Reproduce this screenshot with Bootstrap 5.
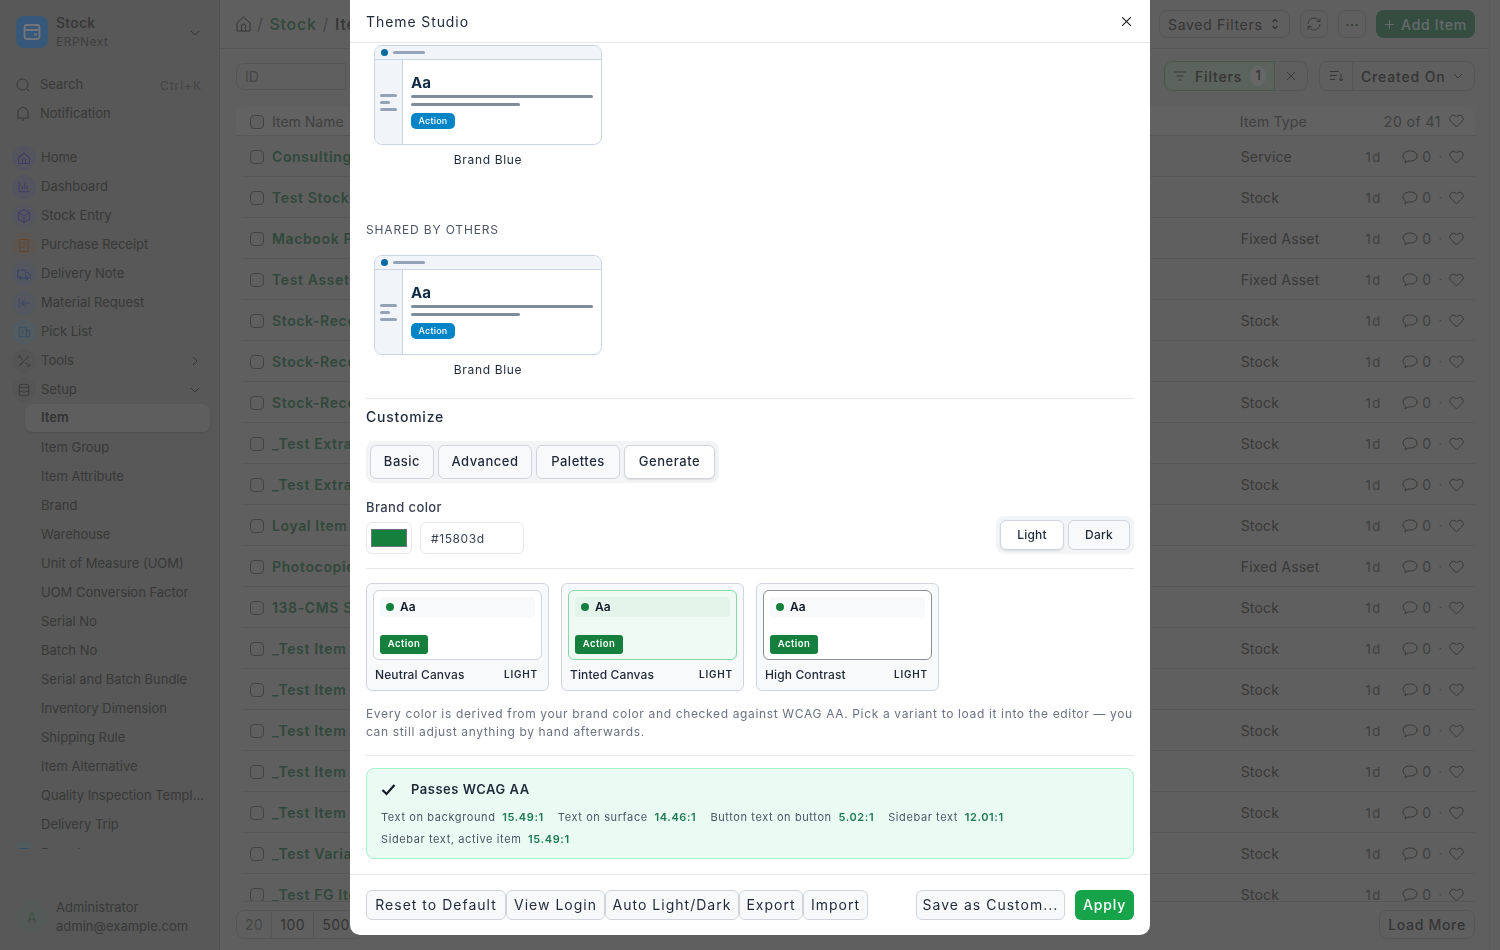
<!DOCTYPE html>
<html lang="en">
<head>
  <meta charset="UTF-8" />
  <meta name="viewport" content="width=device-width, initial-scale=1.0"/>
  <title>Theme Studio</title>
  <link href="https://cdn.jsdelivr.net/npm/bootstrap@5.3.0/dist/css/bootstrap.min.css" rel="stylesheet" />
  <style>
    html, body { height: 100%; overflow: hidden; }
    body { font-family: Inter, "Liberation Sans", sans-serif; color: #1f2937; background: #bebebe; letter-spacing: .03em; }
    svg { flex: none; display: block; }

    /* sidebar */
    .app-side { width: 220px; flex: none; background: #aeb0af; border-right: 1px solid #a2a3a3; color: #6c6c6c; }
    .side-head { height: 70px; padding: 16px 16px 0; }
    .side-logo { width: 32px; height: 32px; border-radius: 8px; background: #70b0f4; }
    .side-title { font-size: 14px; font-weight: 500; line-height: 19px; margin-top: -3px; letter-spacing: .02em; }
    .side-sub { font-size: 12px; line-height: 19px; color: #7e7e7e; }
    .side-tool { height: 29px; padding-left: 16px; padding-right: 17px; font-size: 13px; gap: 10px; letter-spacing: 0; color: #727272; }
    .side-nav { height: 721px; overflow: hidden; padding-top: 15px; flex: none; }
    .side-link { height: 29px; font-size: 13px; padding-left: 12px; padding-right: 19px; gap: 5px; letter-spacing: 0; color: #727272; }
    .side-ico { width: 24px; height: 24px; border-radius: 50%; }
    .side-sublink { height: 29px; font-size: 13px; padding-left: 41px; white-space: nowrap; letter-spacing: 0; color: #727272; }
    .side-sublink.active { height: 28px; margin: 0 9px 1px 25px; padding-left: 16px; background: #bcbcbc; font-weight: 600; border-radius: 8px; box-shadow: 0 1px 2px rgba(0,0,0,.12); color: #666; }
    .side-foot { margin-top: 49px; padding: 0 16px; }
    .side-avatar { width: 32px; height: 32px; border-radius: 50%; background: #a9b5ae; color: #7fa08c; font-size: 14px; }
    .side-foot .side-sub { font-size: 13px; letter-spacing: 0; color: #727272; }

    /* main list */
    .app-main { width: 1270px; flex: none; border-right: 1px solid #b4b4b4; color: #6a6a6a; }
    .top-bar { height: 49px; border-bottom: 1px solid #aeaeae; padding: 0 14px 0 16px; }
    .crumb { font-size: 16px; font-weight: 500; gap: 6px; letter-spacing: .045em; }
    .crumb a { color: #62907a; text-decoration: none; }
    .crumb .sep { color: #8a8a8a; font-weight: 400; }
    .tool-btn { height: 28px; border: 1px solid #adadad; border-radius: 8px; font-size: 14px; padding: 0 8px; letter-spacing: .05em; }
    .btn-add { height: 28px; background: #689a80; color: #c8d8d8; border-radius: 8px; font-size: 14px; font-weight: 500; padding: 0 8px; gap: 6px; width: 99px; letter-spacing: .05em; }
    .filter-bar { height: 58px; padding: 12px 14px 0 16px; }
    .filter-id { width: 110px; height: 27px; border: 1px solid #adadad; border-radius: 8px 0 0 8px; font-size: 14px; color: #8c8c8c; padding-left: 8px; line-height: 25px; margin-top: 2px; letter-spacing: 0; }
    .filter-btn { height: 30px; border: 1px solid #adadad; font-size: 14px; letter-spacing: .06em; font-weight: 500; }
    .count-pill { width: 20px; height: 20px; background: #cfcfcf; border-radius: 50%; font-size: 13px; letter-spacing: 0; }
    .list-head { height: 29px; margin: 0 14px 0 16px; background: #c4c4c4; border-bottom: 1px solid #aeaeae; border-radius: 8px 8px 0 0; font-size: 14px; color: #808080; padding: 0 11px 0 14px; }
    .list-body { height: 766px; overflow: hidden; margin: 0 14px 0 22px; flex: none; border-bottom: 1px solid #aeaeae; }
    .list-row { height: 41px; border-bottom: 1px solid #aeaeae; padding: 0 11px 0 8px; font-size: 14px; color: #727272; }
    .chk { width: 14px; height: 14px; border: 1px solid #868686; border-radius: 4px; background: #bebebe; flex: none; margin-top: 1px; }
    .row-name { width: 971px; margin-left: 8px; padding-top: 1px; font-weight: 600; color: #62907a; font-size: 14px; white-space: nowrap; letter-spacing: .045em; }
    .row-type { width: 125px; letter-spacing: .012em; }
    .row-age { width: 37px; font-size: 13px; color: #808080; letter-spacing: .12em; padding-top: 3px; }
    .row-meta { gap: 4px; color: #808080; }
    .row-meta svg { margin-top: 2px; }
    .list-foot { padding: 8px 14px 0 16px; }
    .page-size { height: 29px; border: 1px solid #adadad; font-size: 14px; padding: 0 8px; line-height: 27px; }

    /* modal */
    .modal-backdrop.studio { opacity: .5; background: #000; }
    .studio-dialog { width: 800px; max-width: 800px; height: 935px; margin: 0 auto; }
    .studio-dialog .modal-content { height: 100%; border: 0; border-radius: 0 0 10px 10px; color: #1f2937; }
    .studio-dialog .modal-header { height: 43px; padding: 0 16px; border-bottom: 1px solid #e5e7eb; border-radius: 0; flex: none; }
    .studio-title { font-size: 14px; font-weight: 400; letter-spacing: .065em; color: #1f2937; }
    .studio-close { font-size: 9px; margin-right: -5px !important; opacity: .9; }
    .studio-dialog .modal-body { padding: 2px 16px 0; overflow: hidden; flex: 1; }
    .studio-dialog .modal-footer { height: 61px; padding: 0 16px; border-top: 1px solid #e5e7eb; flex-wrap: nowrap; flex: none; }

    .theme-card { width: 228px; height: 100px; margin-left: 8px; border: 1px solid #cbd5e1; border-radius: 8px; overflow: hidden; background: #fff; }
    .tc-top { height: 14px; flex: none; background: #f1f5f9; border-bottom: 1px solid #cbd5e1; padding-left: 6px; gap: 5px; }
    .tc-dot { width: 7px; height: 7px; border-radius: 50%; background: #0369a1; }
    .tc-bar { height: 3px; border-radius: 2px; background: #94a3b8; }
    .tc-side { width: 28px; flex: none; background: #f1f5f9; border-right: 1px solid #cbd5e1; padding-left: 5px; gap: 4px; }
    .tc-main { padding: 14px 8px 0; }
    .tc-aa { font-size: 15px; font-weight: 700; line-height: 18px; color: #0f2a43; letter-spacing: 0; }
    .tc-line { height: 3px; border-radius: 2px; background: #7f8c99; margin-top: 3px; }
    .tc-line.short { width: 109px; margin-top: 5px; }
    .tc-action { width: 44px; height: 16px; margin-top: 7px; background: #0284c7; color: #fff; font-size: 9px; font-weight: 500; border-radius: 5px; letter-spacing: .02em; }
    .tc-caption { width: 228px; margin-left: 8px; text-align: center; font-size: 12px; line-height: 15px; margin-top: 7px; letter-spacing: .055em; }
    .studio-label { font-size: 12px; line-height: 15px; color: #4b5563; letter-spacing: .07em; margin: 55px 0 18px; }
    .studio-hr { border-top: 1px solid #e5e7eb; }
    .studio-h { font-size: 14px; font-weight: 500; line-height: 18px; letter-spacing: .055em; margin: 9px 0 15px; }
    .seg { background: #f3f4f6; border-radius: 8px; padding: 4px; gap: 4px; }
    .seg .btn { --bs-btn-padding-x: 0; --bs-btn-padding-y: 0; height: 34px; font-size: 13px; font-weight: 500; background: #f8f9fb; border: 1px solid #d1d5db; border-radius: 6px; color: #1f2937; letter-spacing: .04em; }
    .seg .btn.on { background: #fff; box-shadow: 0 1px 2px rgba(0,0,0,.1); }
    .seg-sm .btn { height: 30px; font-size: 12px; letter-spacing: .02em; }
    .brand-lbl { font-size: 13px; font-weight: 500; line-height: 16px; letter-spacing: .03em; color: #374151; margin-top: 16px; }
    .brand-row { margin-top: 1px; }
    .swatch { width: 46px; height: 32px; border: 1px solid #e5e7eb; border-radius: 6px; padding: 6px 4px; }
    .swatch span { display: block; height: 100%; background: #15803d; border: 1px solid #6b7280; }
    .hex-input { width: 104px; height: 32px; border: 1px solid #e5e7eb; border-radius: 6px; font-size: 12px; padding: 0 10px; line-height: 32px; letter-spacing: .05em; color: #374151; }
    .variants { gap: 12px; margin-top: 14px; }
    .variant { width: 183px; height: 108px; background: #f8f9fb; border: 1px solid #d1d5db; border-radius: 6px; padding: 6px; }
    .vr-canvas { height: 70px; background: #fff; border: 1px solid #d1d5db; border-radius: 6px; padding: 6px; }
    .vr-canvas.tint { background: #f0faf4; border-color: #86d8a4; }
    .vr-canvas.contrast { border-color: #8a8f98; }
    .vr-top { height: 20px; background: #f8f9fa; border-radius: 4px; padding-left: 6px; gap: 6px; font-size: 12px; font-weight: 600; letter-spacing: 0; color: #111827; }
    .tint .vr-top { background: #e5f4ea; }
    .vr-dot { width: 8px; height: 8px; border-radius: 50%; background: #15803d; }
    .vr-action { width: 48px; height: 19px; margin-top: 18px; background: #15803d; color: #fff; border-radius: 3px; font-size: 9.5px; font-weight: 600; letter-spacing: .05em; }
    .vr-name { padding: 0 4px 0 2px; font-size: 12px; font-weight: 500; line-height: 15px; margin-top: 7px; letter-spacing: .01em; }
    .vr-name small { font-size: 10px; font-weight: 600; letter-spacing: .08em; }
    .studio-note { font-size: 12px; line-height: 18px; color: #6b7280; letter-spacing: .054em; margin: 14px 0 14px; }
    .wcag { height: 91px; margin-top: 12px; background: #e9fbf3; border: 1px solid #a7f3d0; border-radius: 8px; padding: 12px 14px; }
    .wcag-title { font-size: 13px; font-weight: 600; letter-spacing: .04em; line-height: 16px; gap: 15px; }
    .wcag-row { font-size: 11px; line-height: 22px; color: #4b5563; letter-spacing: .055em; gap: 14px; }
    .wcag-row b { font-weight: 600; color: #1f7a54; margin-left: 3px; }
    .foot-btn { --bs-btn-padding-x: 0; --bs-btn-padding-y: 0; height: 30px; padding-bottom: 2px; font-size: 14px; background: #f8f9fb; border: 1px solid #d1d5db; border-radius: 6px; color: #1f2937; letter-spacing: .072em; }
    .foot-apply { height: 30px; width: 59px; --bs-btn-padding-x: 0; --bs-btn-padding-y: 0; padding-bottom: 2px; font-size: 14px; background: #16a34a; border: 0; border-radius: 6px; color: #fff; font-weight: 500; letter-spacing: .06em; }
    .foot-apply:hover { background: #16a34a; color: #fff; }
  </style>
</head>
<body>

  <div class="d-flex h-100">
    <aside class="app-side d-flex flex-column">
      <div class="side-head d-flex align-items-start gap-2">
        <div class="side-logo d-flex align-items-center justify-content-center">
          <svg width="18" height="18" viewBox="0 0 18 18" fill="none" stroke="#e4ecf4" stroke-width="1.800"><rect x="1.500" y="2" width="15" height="14" rx="2.500"/><path d="M1.500 7h15M11 11.500h3"/></svg>
        </div>
        <div class="flex-grow-1">
          <div class="side-title">Stock</div>
          <div class="side-sub">ERPNext</div>
        </div>
        <svg style="margin:11px 2px 0 0" width="12" height="12" viewBox="0 0 12 12" fill="none" stroke="#6c6c6c"><path d="M2 4l4 4 4-4"/></svg>
      </div>
      <div class="side-tool d-flex align-items-center">
        <svg width="14" height="14" viewBox="0 0 14 14" fill="none" stroke="#6c6c6c"><circle cx="6.500" cy="6.500" r="5.500"/><path d="M11 11l2 2"/></svg>
        <span class="flex-grow-1">Search</span><span style="font-size:12px;letter-spacing:.08em;color:#8a8a8a;margin-top:2px">Ctrl+K</span>
      </div>
      <div class="side-tool d-flex align-items-center">
        <svg width="14" height="15" viewBox="0 0 14 15" fill="none" stroke="#6c6c6c"><path d="M2 11V6.500a5 5 0 0 1 10 0V11l1 1H1zM6 14h2"/></svg>
        <span>Notification</span>
      </div>
      <nav class="side-nav" id="sideNav"></nav>
      <div class="side-foot d-flex align-items-center gap-2">
        <div class="side-avatar d-flex align-items-center justify-content-center">A</div>
        <div>
          <div class="side-sub">Administrator</div>
          <div class="side-sub">admin@example.com</div>
        </div>
      </div>
    </aside>

    <main class="app-main d-flex flex-column">
      <div class="top-bar d-flex align-items-center">
        <div class="crumb d-flex align-items-center flex-grow-1">
          <svg width="15" height="16" viewBox="0 0 15 16" fill="none" stroke="#6c6c6c"><path d="M1 7l6.500-6L14 7v8H1zM5.500 15v-5a2 2 0 0 1 4 0v5"/></svg>
          <span class="sep">/</span><a href="#">Stock</a><span class="sep">/</span><span>Item</span>
        </div>
        <div class="d-flex align-items-center gap-2">
          <div class="tool-btn d-flex align-items-center gap-2" style="width:131px;margin-right:2px">Saved Filters
            <svg width="8" height="12" viewBox="0 0 8 12" fill="none" stroke="#6a6a6a" stroke-width="1.300"><path d="M1.500 4L4 1.500 6.500 4M1.500 8L4 10.500 6.500 8"/></svg>
          </div>
          <div class="tool-btn d-flex align-items-center justify-content-center" style="width:28px;padding:0;margin-right:2px">
            <svg width="14" height="14" viewBox="0 0 14 14" fill="none" stroke="#787878"><path d="M1 7a6 6 0 0 1 10.500-4L13 4.500M13 1v3.500H9.500M13 7a6 6 0 0 1-10.500 4L1 9.500M1 13V9.500h3.500"/></svg>
          </div>
          <div class="tool-btn d-flex align-items-center justify-content-center" style="width:28px;padding:0;margin-right:2px;letter-spacing:0">&#8943;</div>
          <div class="btn-add d-flex align-items-center justify-content-center">
            <svg width="11" height="11" viewBox="0 0 11 11" stroke="#c8d8d8"><path d="M5.500 1v9M1 5.500h9"/></svg>Add Item
          </div>
        </div>
      </div>

      <div class="filter-bar d-flex justify-content-between">
        <div class="filter-id">ID</div>
        <div class="d-flex" style="gap:11px">
          <div class="d-flex">
            <div class="filter-btn d-flex align-items-center gap-2 px-2" style="width:111px;background:#b5c6bc;border-color:#8fb29f;border-radius:8px 0 0 8px">
              <svg width="14" height="10" viewBox="0 0 14 10" stroke="#727272"><path d="M1 1h12M3.500 5h7M5.500 9h3"/></svg>Filters<span class="count-pill d-flex align-items-center justify-content-center">1</span>
            </div>
            <div class="filter-btn d-flex align-items-center justify-content-center" style="width:33px;border-left:0;border-radius:0 8px 8px 0">
              <svg width="10" height="10" viewBox="0 0 10 10" stroke="#727272"><path d="M1 1l8 8M9 1L1 9"/></svg>
            </div>
          </div>
          <div class="d-flex">
            <div class="filter-btn d-flex align-items-center justify-content-center" style="width:34px;border-radius:8px 0 0 8px">
              <svg width="15" height="12" viewBox="0 0 15 12" fill="none" stroke="#6a6a6a"><path d="M1 1.500h9M1 5.500h7M1 9.500h5M12 4v7M10 9l2 2 2-2"/></svg>
            </div>
            <div class="filter-btn d-flex align-items-center justify-content-between" style="width:122px;border-left:0;border-radius:0 8px 8px 0;padding:0 11px 0 8px">Created On
              <svg width="10" height="10" viewBox="0 0 10 10" fill="none" stroke="#727272"><path d="M1 3l4 4 4-4"/></svg>
            </div>
          </div>
        </div>
      </div>

      <div class="list-head d-flex align-items-center">
        <span class="chk"></span>
        <span class="flex-grow-1 ms-2" style="letter-spacing:0">Item Name</span>
        <span style="width:144px;letter-spacing:.012em">Item Type</span>
        <span>20 of 41</span>
        <svg class="ms-2" width="15" height="14" viewBox="0 0 15 14" fill="none" stroke="#727272"><path d="M7.500 13L1.800 7.300a3.500 3.500 0 0 1 5-5l.7.700.7-.7a3.500 3.500 0 0 1 5 5z"/></svg>
      </div>
      <div class="list-body" id="listBody"></div>
      <div class="list-foot d-flex justify-content-between">
        <div class="d-flex">
          <span class="page-size" style="border-radius:8px 0 0 8px;color:#8c8c8c">20</span><span class="page-size" style="border-left:0">100</span><span class="page-size" style="border-left:0">500</span>
        </div>
        <div class="tool-btn d-flex align-items-center justify-content-center" style="height:29px;width:96px;font-weight:500">Load More</div>
      </div>
    </main>
  </div>

  <div class="modal-backdrop studio show"></div>

  <div class="modal d-block">
    <div class="modal-dialog studio-dialog">
      <div class="modal-content">
        <div class="modal-header">
          <h5 class="modal-title studio-title">Theme Studio</h5>
          <button type="button" class="btn-close studio-close"></button>
        </div>
        <div class="modal-body">
          <div class="theme-slot"></div>
          <div class="studio-label text-uppercase">Shared by others</div>
          <div class="theme-slot"></div>

          <div class="studio-hr" style="margin-top:21px"></div>
          <div class="studio-h">Customize</div>
          <div class="seg d-inline-flex">
            <button class="btn" style="width:64px">Basic</button>
            <button class="btn" style="width:94px">Advanced</button>
            <button class="btn" style="width:84px">Palettes</button>
            <button class="btn on" style="width:91px">Generate</button>
          </div>
          <div class="brand-lbl">Brand color</div>
          <div class="brand-row d-flex justify-content-between align-items-end">
            <div class="d-flex gap-2">
              <div class="swatch"><span></span></div>
              <div class="hex-input">#15803d</div>
            </div>
            <div class="seg seg-sm d-flex">
              <button class="btn on" style="width:64px">Light</button>
              <button class="btn" style="width:62px">Dark</button>
            </div>
          </div>
          <div class="studio-hr" style="margin-top:14px"></div>

          <div class="variants d-flex" id="variants"></div>
          <p class="studio-note">Every color is derived from your brand color and checked against WCAG AA. Pick a variant to load it into the editor — you can still adjust anything by hand afterwards.</p>
          <div class="studio-hr"></div>

          <div class="wcag">
            <div class="wcag-title d-flex align-items-center">
              <svg width="15" height="13" viewBox="0 0 15 13" fill="none" stroke="#111827" stroke-width="2.200"><path d="M1.500 7l4 4L13.500 2"/></svg>
              Passes WCAG AA
            </div>
            <div class="wcag-row d-flex" style="margin-top:9px">
              <span>Text on background <b>15.49:1</b></span>
              <span>Text on surface <b>14.46:1</b></span>
              <span>Button text on button <b>5.02:1</b></span>
              <span>Sidebar text <b>12.01:1</b></span>
            </div>
            <div class="wcag-row d-flex">
              <span>Sidebar text, active item <b>15.49:1</b></span>
            </div>
          </div>
        </div>
        <div class="modal-footer justify-content-between">
          <div class="d-flex m-0">
            <button class="btn foot-btn" style="width:140px">Reset to Default</button>
            <button class="btn foot-btn" style="width:99px">View Login</button>
            <button class="btn foot-btn" style="width:134px">Auto Light/Dark</button>
            <button class="btn foot-btn" style="width:64px">Export</button>
            <button class="btn foot-btn" style="width:65px">Import</button>
          </div>
          <div class="d-flex m-0" style="gap:10px">
            <button class="btn foot-btn" style="width:149px">Save as Custom...</button>
            <button class="btn foot-apply">Apply</button>
          </div>
        </div>
      </div>
    </div>
  </div>

  <script src="https://cdn.jsdelivr.net/npm/bootstrap@5.3.0/dist/js/bootstrap.bundle.min.js"></script>
  <script>
    // preview cards
    const themeCard = `
      <div class="theme-card d-flex flex-column">
        <div class="tc-top d-flex align-items-center"><span class="tc-dot"></span><span class="tc-bar" style="width:32px"></span></div>
        <div class="d-flex flex-grow-1">
          <div class="tc-side d-flex flex-column justify-content-center">
            <span class="tc-bar" style="width:17px"></span><span class="tc-bar" style="width:10px"></span><span class="tc-bar" style="width:17px"></span>
          </div>
          <div class="tc-main flex-grow-1">
            <div class="tc-aa">Aa</div>
            <div class="tc-line"></div>
            <div class="tc-line short"></div>
            <div class="tc-action d-flex align-items-center justify-content-center">Action</div>
          </div>
        </div>
      </div>
      <div class="tc-caption">Brand Blue</div>`;
    document.querySelectorAll('.theme-slot').forEach(el => { el.innerHTML = themeCard; });

    document.getElementById('variants').innerHTML = [
      ['', 'Neutral Canvas'], ['tint', 'Tinted Canvas'], ['contrast', 'High Contrast']
    ].map(([cls, name]) => `
      <div class="variant">
        <div class="vr-canvas ${cls}">
          <div class="vr-top d-flex align-items-center"><span class="vr-dot"></span>Aa</div>
          <div class="vr-action d-flex align-items-center justify-content-center">Action</div>
        </div>
        <div class="vr-name d-flex justify-content-between align-items-center"><span>${name}</span><small>LIGHT</small></div>
      </div>`).join('');

    // sidebar
    const sideIcons = {
      home: 'M3 10l7-6 7 6v7H3zM8 17v-4a2 2 0 0 1 4 0v4',
      chart: 'M4 3v13h13M8 13V9M11 13V5M14 13V8',
      box: 'M10 2l7 4v8l-7 4-7-4V6zM3 6l7 4 7-4M10 10v8',
      doc: 'M5 3h10v15H5zM8 7h4M8 10h4M8 13h3',
      truck: 'M2 5h10v10H2zM12 8h3l3 3v4h-6M7 15a1.500 1.500 0 1 0 0 .1M15 15a1.500 1.500 0 1 0 0 .1',
      req: 'M4 4v12M17 10H7M11 6l-4 4 4 4',
      pick: 'M4 4h9v12H4zM13 8h4v8h-4M7 8h3M7 11h3',
      tools: 'M4 16L16 4M5 5l3 3M12 12l3 3M3 6a3 3 0 0 1 3-3M14 17a3 3 0 0 0 3-3',
      db: 'M4 5c0-3 12-3 12 0v10c0 3-12 3-12 0zM4 5c0 3 12 3 12 0M4 10c0 3 12 3 12 0'
    };
    const mainLinks = [
      ['Home', 'home', '#7d78c8', '#a8a8bd'], ['Dashboard', 'chart', '#7d78c8', '#a8a8bd'],
      ['Stock Entry', 'box', '#8a78d0', '#ababc0'], ['Purchase Receipt', 'doc', '#c98a5c', '#b8aca4'],
      ['Delivery Note', 'truck', '#7a8cc8', '#a8acc0'], ['Material Request', 'req', '#7a8cc8', '#a8acc0'],
      ['Pick List', 'pick', '#6f9fc8', '#a4b6be'], ['Tools', 'tools', '#787878', '#a8aaa9'], ['Setup', 'db', '#787878', '#a8aaa9']
    ];
    const subLinks = ['Item', 'Item Group', 'Item Attribute', 'Brand', 'Warehouse', 'Unit of Measure (UOM)', 'UOM Conversion Factor', 'Serial No', 'Batch No', 'Serial and Batch Bundle', 'Inventory Dimension', 'Shipping Rule', 'Item Alternative', 'Quality Inspection Templ...', 'Delivery Trip'];

    function sideLink(name, icon, stroke, bg) {
      let caret = '';
      if (name === 'Tools') caret = '<svg class="ms-auto" width="10" height="10" viewBox="0 0 10 10" fill="none" stroke="#6c6c6c"><path d="M3 1l4 4-4 4"/></svg>';
      if (name === 'Setup') caret = '<svg class="ms-auto" width="10" height="10" viewBox="0 0 10 10" fill="none" stroke="#6c6c6c"><path d="M1 3l4 4 4-4"/></svg>';
      return `<div class="side-link d-flex align-items-center"><span class="side-ico d-flex align-items-center justify-content-center" style="background:${bg}">
        <svg width="16" height="16" viewBox="0 0 20 20" fill="none" stroke="${stroke}" stroke-width="1.300"><path d="${sideIcons[icon]}"/></svg></span>${name}${caret}</div>`;
    }
    document.getElementById('sideNav').innerHTML =
      mainLinks.map(t => sideLink(...t)).join('') +
      subLinks.map((s, i) => `<div class="side-sublink d-flex align-items-center ${i === 0 ? 'active' : ''}">${s}</div>`).join('') +
      sideLink('Reports', 'doc', '#6f9fc8', '#a4b6be');

    // item rows
    const rows = [
      ['Consulting', 'Service'], ['Test Stock Item', 'Stock'], ['Macbook Pro', 'Fixed Asset'], ['Test Asset Item', 'Fixed Asset'],
      ['Stock-Reconcile', 'Stock'], ['Stock-Reconcile', 'Stock'], ['Stock-Reconcile', 'Stock'], ['_Test Extra Item', 'Stock'],
      ['_Test Extra Item', 'Stock'], ['Loyal Item', 'Stock'], ['Photocopier', 'Fixed Asset'], ['138-CMS Shoe', 'Stock'],
      ['_Test Item C', 'Stock'], ['_Test Item H', 'Stock'], ['_Test Item H', 'Stock'], ['_Test Item W', 'Stock'],
      ['_Test Item W', 'Stock'], ['_Test Variant', 'Stock'], ['_Test FG Item', 'Stock']
    ];
    document.getElementById('listBody').innerHTML = rows.map(([name, type]) => `
      <div class="list-row d-flex align-items-center">
        <span class="chk"></span>
        <span class="row-name">${name}</span>
        <span class="row-type">${type}</span>
        <span class="row-age">1d</span>
        <span class="row-meta d-flex align-items-center">
          <svg width="16" height="14" viewBox="0 0 16 14" fill="none" stroke="#727272"><path d="M8 1c4 0 7 2 7 5s-3 5-7 5H6l-3 2 .5-3C2 9 1 7.500 1 6c0-3 3-5 7-5z"/></svg>
          0<span style="font-size:10px;margin:0 3px">·</span>
          <svg width="15" height="14" viewBox="0 0 15 14" fill="none" stroke="#727272"><path d="M7.500 13L1.800 7.300a3.500 3.500 0 0 1 5-5l.7.700.7-.7a3.500 3.500 0 0 1 5 5z"/></svg>
        </span>
      </div>`).join('');
  </script>

</body>
</html>
